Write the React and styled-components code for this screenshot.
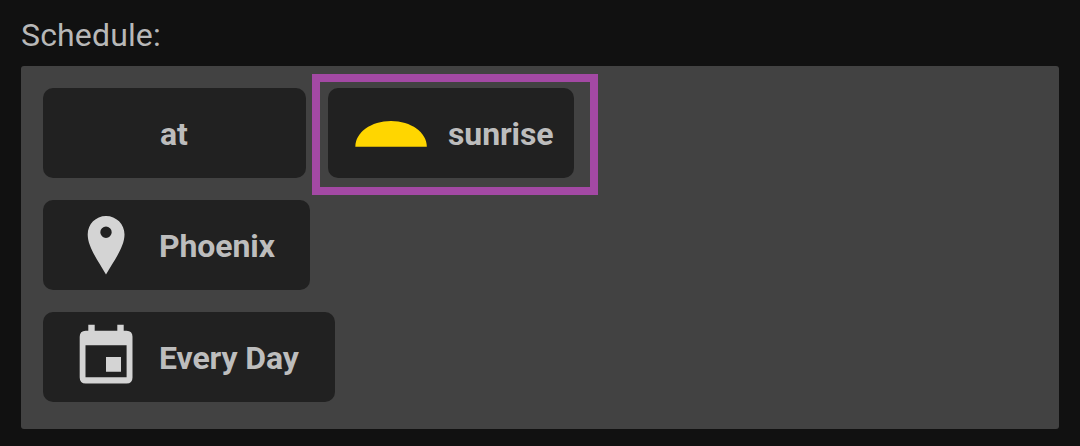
import React from "react";
import styled, { createGlobalStyle } from "styled-components";

const GlobalStyle = createGlobalStyle`
  * { box-sizing: border-box; }
  body {
    margin: 0;
    background: #111111;
    color: #bdbdbd;
    font-family: Roboto, "Liberation Sans", sans-serif;
  }
`;

const Page = styled.main`
  height: 446px;
  padding: 16px 21px 17px;
  overflow: hidden;
`;

const Title = styled.h1`
  margin: 0 0 12px;
  height: 38px;
  color: #b8b8b8;
  font-size: 32px;
  font-weight: 400;
  letter-spacing: 0.15px;
  line-height: 38px;
`;

const Panel = styled.section`
  display: flex;
  flex-direction: column;
  gap: 22px;
  height: 363px;
  padding: 22px;
  border-radius: 3px;
  background: #424242;
`;

const Row = styled.div`
  display: flex;
  gap: 22px;
`;

const Chip = styled.button`
  display: flex;
  align-items: center;
  flex: none;
  width: ${(p) => p.$width}px;
  height: 90px;
  padding: 0 0 0 27px;
  border: 0;
  border-radius: 10px;
  background: #212121;
  color: #bdbdbd;
  font: inherit;
`;

const IconSlot = styled.span`
  display: block;
  flex: none;
  width: 72px;
  height: 72px;
  margin-right: ${(p) => p.$gap ?? 17}px;

  svg { display: block; }
`;

const Label = styled.span`
  padding-top: 2px;
  font-size: 32px;
  font-weight: 700;
  letter-spacing: -0.1px;
  line-height: 38px;
  white-space: nowrap;
`;

const Highlighted = styled.div`
  position: relative;
`;

const HighlightFrame = styled.span`
  position: absolute;
  top: -14px;
  right: -24px;
  bottom: -17px;
  left: -16px;
  border: 8px solid #a349a4;
  pointer-events: none;
`;

const SunIcon = () => (
  <svg width="72" height="72" viewBox="0 0 72 72">
    <path d="M0.3 49.8C0.3 35.5 16 24 36 24S71.8 35.5 71.8 49.8Z" fill="#ffd600" />
  </svg>
);

const PinIcon = () => (
  <svg width="72" height="72" viewBox="0 0 72 72">
    <path
      fill="#d4d4d4"
      fillRule="evenodd"
      d="M36 7C25.8 7 17.7 15.2 17.7 25.4C17.7 38 28.5 52.5 36 65.5C43.5 52.5 54.5 38 54.5 25.4C54.5 15.2 46.2 7 36 7ZM36 17.5a5.7 5.7 0 1 1 0 11.4a5.7 5.7 0 0 1 0-11.4Z"
    />
  </svg>
);

const CalendarIcon = () => (
  <svg width="72" height="72" viewBox="0 0 72 72">
    <path
      fill="#d4d4d4"
      fillRule="evenodd"
      d="M18.3 3.7H24.7V9.7H47.3V3.7H53.7V9.7H56.5Q62.5 9.7 62.5 15.7V56.5Q62.5 62.5 56.5 62.5H15.7Q9.7 62.5 9.7 56.5V15.7Q9.7 9.7 15.7 9.7H18.3ZM15.5 24.3V56.2H56.6V24.3ZM36 36H51V50.8H36Z"
    />
  </svg>
);

export default function App() {
  return (
    <>
      <GlobalStyle />
      <Page>
        <Title>Schedule:</Title>
        <Panel>
          <Row>
            <Chip $width={263}>
              <IconSlot $gap={18} />
              <Label>at</Label>
            </Chip>
            <Highlighted>
              <Chip $width={246}>
                <IconSlot $gap={21}>
                  <SunIcon />
                </IconSlot>
                <Label>sunrise</Label>
              </Chip>
              <HighlightFrame />
            </Highlighted>
          </Row>
          <Row>
            <Chip $width={267}>
              <IconSlot>
                <PinIcon />
              </IconSlot>
              <Label>Phoenix</Label>
            </Chip>
          </Row>
          <Row>
            <Chip $width={292}>
              <IconSlot>
                <CalendarIcon />
              </IconSlot>
              <Label>Every Day</Label>
            </Chip>
          </Row>
        </Panel>
      </Page>
    </>
  );
}
